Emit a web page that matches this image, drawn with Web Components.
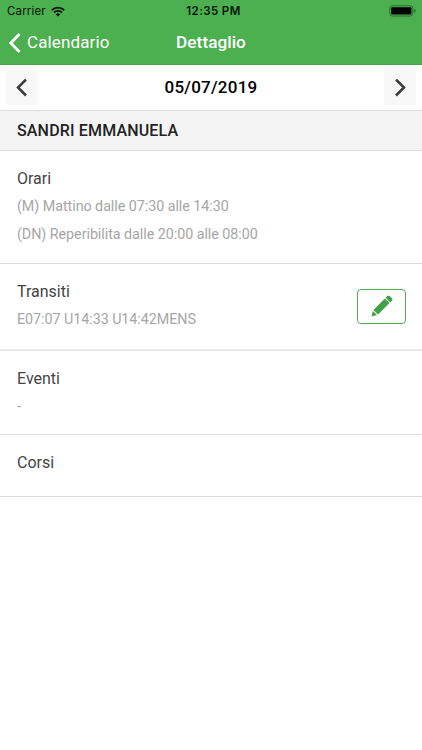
<!DOCTYPE html>
<html lang="it">
<head>
<meta charset="utf-8">
<title>Dettaglio</title>
<style>
body { margin: 0; background: #fff; font-family: Roboto, "Liberation Sans", sans-serif; }
</style>
</head>
<body>
<detail-page></detail-page>
<script>
const define = (name, html) => customElements.define(name, class extends HTMLElement {
  constructor() {
    super();
    this.attachShadow({ mode: 'open' }).innerHTML = html;
  }
});

define('status-bar', `
<style>
:host { display: grid; grid-template-columns: 1fr auto 1fr; align-items: center; height: 22px; padding: 0 6px 0 7px; color: #071207; font: 11.5px/22px Inter, sans-serif; }
.left { display: flex; align-items: center; gap: 5px; letter-spacing: .15px; }
.time { font-weight: 600; letter-spacing: .4px; padding-left: 4px; }
.battery { justify-self: end; }
svg { display: block; }
</style>
<div class="left"><span>Carrier</span>
<svg width="14" height="11" viewBox="0 0 14 11"><path d="M.8 4.1a9 9 0 0 1 12.4 0M3 6.5a5.8 5.8 0 0 1 8 0" fill="none" stroke="#071207" stroke-width="1.9"/><path d="M4.8 8.2a3.2 3.2 0 0 1 4.4 0L7 10.6z" fill="#071207"/></svg></div>
<span class="time">12:35 PM</span>
<svg class="battery" width="27" height="12" viewBox="0 0 27 12"><rect x=".8" y=".8" width="23" height="10.2" rx="2.4" fill="none" stroke="#286b2b" stroke-width="1"/><rect x="2.2" y="2.2" width="20.2" height="7.4" rx="1.1" fill="#000"/><path d="M25.2 4q1.5.6 1.5 2t-1.5 2z" fill="#286b2b"/></svg>
`);

define('nav-bar', `
<style>
:host { display: grid; grid-template-columns: 1fr auto 1fr; align-items: center; height: 43px; padding: 0 9px 2px; color: #fff; line-height: 40px; box-sizing: border-box; border-bottom: 1px solid #48a34b; }
.back { display: flex; align-items: center; gap: 6px; font-size: 17px; letter-spacing: .12px; }
.title { font-size: 17.2px; font-weight: 500; letter-spacing: .04px; }
svg { display: block; position: relative; top: 1px; }
</style>
<div class="back"><svg width="12" height="20" viewBox="0 0 12 20"><path d="M10.6 1 1.8 10l8.8 9" fill="none" stroke="#fff" stroke-width="2.8"/></svg><slot name="back"></slot></div>
<span class="title"><slot></slot></span>
`);

define('step-button', `
<style>
:host { display: grid; place-items: center; width: 32px; height: 35px; border-radius: 3px; background: #f8f8f8; }
:host([next]) svg { transform: scaleX(-1); }
svg { display: block; }
</style>
<svg width="12" height="18" viewBox="0 0 12 18"><path d="M10 .5 2 8.5l8 8" fill="none" stroke="#3b3b3b" stroke-width="2.5"/></svg>
`);

define('date-bar', `
<style>
:host { display: flex; align-items: center; justify-content: space-between; height: 45px; padding: 0 6px; box-sizing: border-box; }
.date { font-size: 17px; font-weight: 500; letter-spacing: .24px; color: #000; padding-bottom: 2px; }
</style>
<step-button></step-button><span class="date"><slot></slot></span><step-button next></step-button>
`);

define('person-header', `
<style>
:host { display: flex; align-items: center; height: 41px; padding: 0 17px; box-sizing: border-box; background: #f4f4f4; border: solid #dedede; border-width: 1px 0; font-size: 16px; font-weight: 500; letter-spacing: .16px; color: #222; }
</style>
<slot></slot>
`);

define('detail-section', `
<style>
:host { display: flex; justify-content: space-between; align-items: center; padding: 0 16px 0 17px; box-sizing: border-box; border-bottom: 1px solid #dedede; }
.text { align-self: flex-start; padding-top: 15px; }
.title { font-size: 16px; line-height: 26px; color: #444; }
.lines { font-size: 14.3px; line-height: 28.4px; letter-spacing: -.04px; color: #a6a6a6; }
</style>
<div class="text"><div class="title"><slot name="title"></slot></div><div class="lines"><slot></slot></div></div><slot name="action"></slot>
`);

define('edit-button', `
<style>
:host { display: grid; place-items: center; width: 49px; height: 35px; box-sizing: border-box; border: 1px solid #4caf50; border-radius: 4px; background: #fff; }
svg { display: block; position: relative; top: -1px; }
</style>
<svg width="22" height="22" viewBox="0 0 22 22" fill="#43a047"><path d="M.4 21.6 1.9 16 6 20.1zM2.4 15 13.9 3.5 18.5 8.1 7 19.6zM14.6 2.8 16.4 1Q17.6 0 18.7 1L21 3.3Q22 4.4 21 5.6L19.2 7.4z"/></svg>
`);

define('detail-page', `
<style>
:host { display: flex; flex-direction: column; height: 750px; background: #fff; }
header { background: #4caf50; }
.orari { height: 113px; }
.transiti { height: 87px; border-bottom: 2px solid #e8e8e8; }
.eventi { height: 84px; }
.corsi { height: 62px; }
</style>
<header><status-bar></status-bar><nav-bar><span slot="back">Calendario</span>Dettaglio</nav-bar></header>
<date-bar>05/07/2019</date-bar>
<person-header>SANDRI EMMANUELA</person-header>
<detail-section class="orari"><span slot="title">Orari</span><div>(M) Mattino dalle 07:30 alle 14:30</div><div>(DN) Reperibilita dalle 20:00 alle 08:00</div></detail-section>
<detail-section class="transiti"><span slot="title">Transiti</span><div>E07:07 U14:33 U14:42MENS</div><edit-button slot="action"></edit-button></detail-section>
<detail-section class="eventi"><span slot="title">Eventi</span><div>-</div></detail-section>
<detail-section class="corsi"><span slot="title">Corsi</span></detail-section>
`);
</script>
</body>
</html>
